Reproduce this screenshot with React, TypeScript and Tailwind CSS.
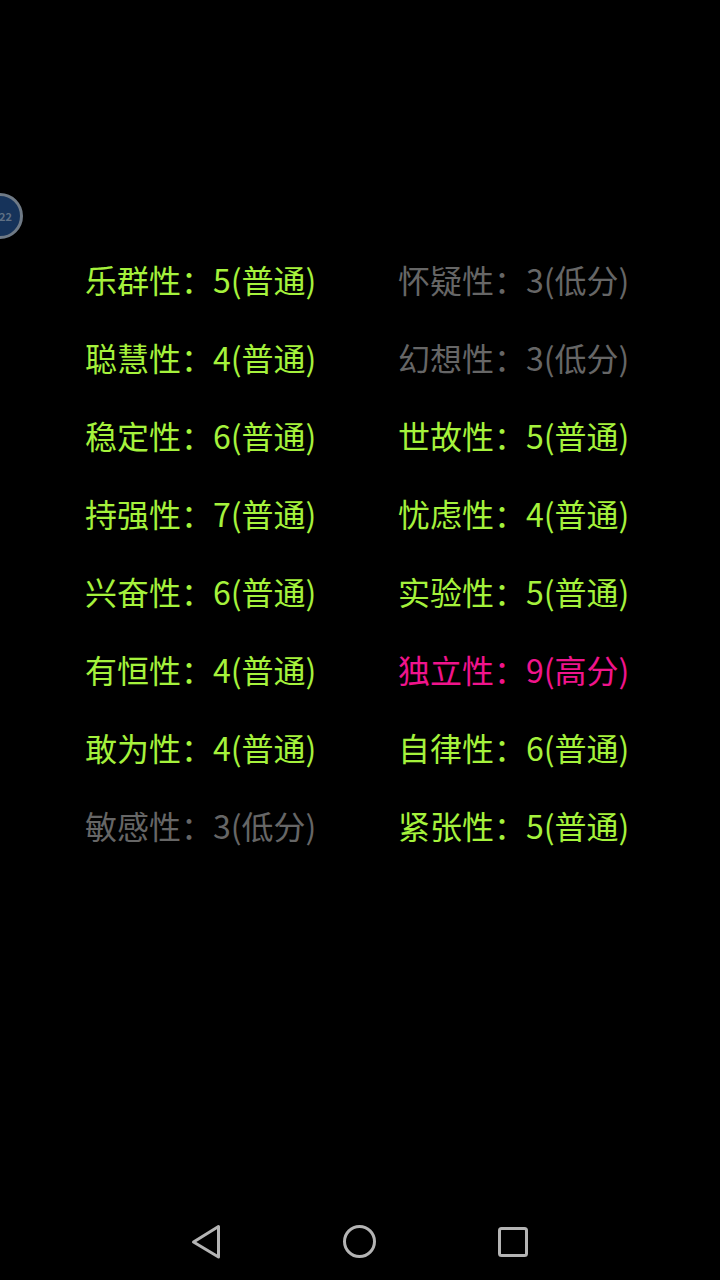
const rows: [string, string, string][] = [
  ["乐群性", "5(普通)", "normal"],
  ["怀疑性", "3(低分)", "low"],
  ["聪慧性", "4(普通)", "normal"],
  ["幻想性", "3(低分)", "low"],
  ["稳定性", "6(普通)", "normal"],
  ["世故性", "5(普通)", "normal"],
  ["持强性", "7(普通)", "normal"],
  ["忧虑性", "4(普通)", "normal"],
  ["兴奋性", "6(普通)", "normal"],
  ["实验性", "5(普通)", "normal"],
  ["有恒性", "4(普通)", "normal"],
  ["独立性", "9(高分)", "high"],
  ["敢为性", "4(普通)", "normal"],
  ["自律性", "6(普通)", "normal"],
  ["敏感性", "3(低分)", "low"],
  ["紧张性", "5(普通)", "normal"],
];

const colors: Record<string, string> = {
  normal: "text-[#a5f23c]",
  low: "text-[#666666]",
  high: "text-[#f0148c]",
};

export default function App() {
  return (
    <div
      className="relative flex h-[1280px] w-[720px] flex-col overflow-hidden bg-black"
      style={{ fontFamily: '"Noto Sans CJK SC", "Noto Sans", sans-serif' }}
    >
      {/* floating bubble */}
      <div className="absolute left-[-23px] top-[193px] flex h-[46px] w-[46px] items-center justify-end rounded-full border-[3px] border-[#6f7a86] bg-[#16335a] pr-[8px] text-[11px] font-bold text-[#5f7084]">
        22
      </div>

      <div className="flex-1 pt-[240px]">
        <div className="grid grid-cols-[313px_1fr] pl-[85px]">
          {rows.map(([name, score, level]) => (
            <div key={name} className={`flex h-[78px] items-center whitespace-nowrap text-[32px] ${colors[level]}`}>
              {name}：{score}
            </div>
          ))}
        </div>
      </div>

      {/* nav bar */}
      <div className="flex h-[76px] items-center justify-center gap-[120px]">
        <svg width="32" height="36" viewBox="0 0 32 36" fill="none">
          <path d="M27.5 2.5V33L2.5 18Z" stroke="#b4b4b4" strokeWidth="3" strokeLinejoin="round" />
        </svg>
        <svg width="34" height="34" viewBox="0 0 34 34" fill="none">
          <circle cx="16.5" cy="16.5" r="15" stroke="#b4b4b4" strokeWidth="3" />
        </svg>
        <svg width="32" height="32" viewBox="0 0 32 32" fill="none">
          <rect x="2.5" y="2.5" width="27" height="27" rx="2" stroke="#b4b4b4" strokeWidth="3" />
        </svg>
      </div>
    </div>
  );
}
